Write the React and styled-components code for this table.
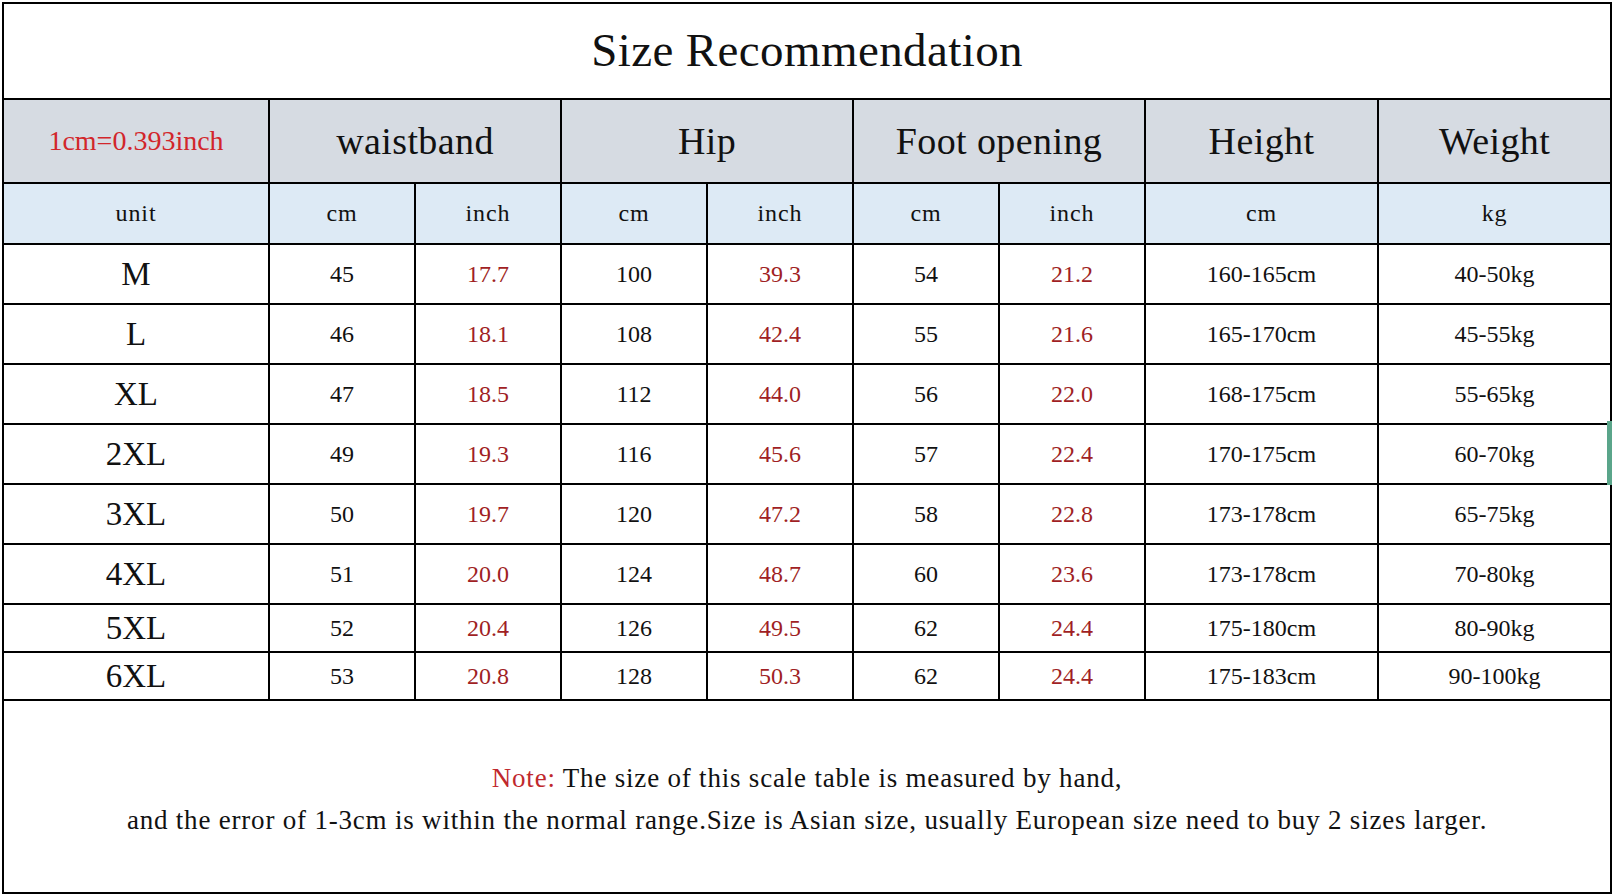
import React from 'react';
import styled, { createGlobalStyle } from 'styled-components';

const Global = createGlobalStyle`
    html, body {
        margin: 0;
        padding: 0;
        background: #fff;
    }
    body {
        font-family: "Liberation Serif", "Times New Roman", serif;
        color: #111;
    }
`;

const Page = styled.div`
    position: relative;
    width: 1612px;
    height: 894px;
    padding: 2px 0 0 2px;
    box-sizing: border-box;
    overflow: hidden;
`;

const Table = styled.table`
    width: 1608px;
    table-layout: fixed;
    border-collapse: collapse;
    border: 2px solid #000;

    td, th {
        border: 2px solid #000;
        padding: 0;
        text-align: center;
        vertical-align: middle;
        white-space: nowrap;
    }
`;

const TitleCell = styled.th`
    height: 92px;
    font-size: 47px;
    font-weight: normal;
    letter-spacing: 0.4px;
    padding-bottom: 2px !important;
`;

const HeadCell = styled.th`
    height: 82px;
    background: #d6dbe2;
    font-weight: normal;
    font-size: ${props => props.small ? '28px' : '38px'};
    color: ${props => props.small ? '#d2262b' : '#111'};
    letter-spacing: ${props => props.small ? '0' : '0.4px'};
`;

const UnitCell = styled.td`
    height: 59px;
    background: #ddeaf5;
    font-size: 24px;
    letter-spacing: 0.9px;
`;

const SizeCell = styled.td`
    height: ${props => props.short ? '46px' : '58px'};
    font-size: 33px;
`;

const ValueCell = styled.td`
    font-size: 24px;
    color: ${props => props.red ? '#a01f24' : '#111'};
`;

const NoteCell = styled.td`
    height: 187px;
    font-size: 27px;
    line-height: 42px;
    letter-spacing: 0.8px;
    padding-top: 4px !important;
`;

const NoteLabel = styled.span`
    color: #c0282d;
`;

const Handle = styled.div`
    position: absolute;
    left: 1607px;
    top: 421px;
    width: 5px;
    height: 64px;
    background: #5aa58a;
`;

const widths = [266, 146, 146, 146, 146, 146, 146, 233, 233];

const rows = [
    ['M', 45, '17.7', 100, '39.3', 54, '21.2', '160-165cm', '40-50kg'],
    ['L', 46, '18.1', 108, '42.4', 55, '21.6', '165-170cm', '45-55kg'],
    ['XL', 47, '18.5', 112, '44.0', 56, '22.0', '168-175cm', '55-65kg'],
    ['2XL', 49, '19.3', 116, '45.6', 57, '22.4', '170-175cm', '60-70kg'],
    ['3XL', 50, '19.7', 120, '47.2', 58, '22.8', '173-178cm', '65-75kg'],
    ['4XL', 51, '20.0', 124, '48.7', 60, '23.6', '173-178cm', '70-80kg'],
    ['5XL', 52, '20.4', 126, '49.5', 62, '24.4', '175-180cm', '80-90kg'],
    ['6XL', 53, '20.8', 128, '50.3', 62, '24.4', '175-183cm', '90-100kg'],
];

const redCols = [2, 4, 6];

export default function App() {
    return (
        <Page>
            <Global />
            <Table>
                <colgroup>
                    {widths.map((w, i) => <col key={i} style={{ width: w }} />)}
                </colgroup>
                <tbody>
                    <tr>
                        <TitleCell colSpan={9}>Size Recommendation</TitleCell>
                    </tr>
                    <tr>
                        <HeadCell small>1cm=0.393inch</HeadCell>
                        <HeadCell colSpan={2}>waistband</HeadCell>
                        <HeadCell colSpan={2}>Hip</HeadCell>
                        <HeadCell colSpan={2}>Foot opening</HeadCell>
                        <HeadCell>Height</HeadCell>
                        <HeadCell>Weight</HeadCell>
                    </tr>
                    <tr>
                        {['unit', 'cm', 'inch', 'cm', 'inch', 'cm', 'inch', 'cm', 'kg'].map((u, i) => (
                            <UnitCell key={i}>{u}</UnitCell>
                        ))}
                    </tr>
                    {rows.map((r, ri) => (
                        <tr key={r[0]}>
                            <SizeCell short={ri > 5}>{r[0]}</SizeCell>
                            {r.slice(1).map((v, i) => (
                                <ValueCell key={i} red={redCols.includes(i + 1)}>{v}</ValueCell>
                            ))}
                        </tr>
                    ))}
                    <tr>
                        <NoteCell colSpan={9}>
                            <NoteLabel>Note:</NoteLabel> The size of this scale table is measured by hand,<br />
                            and the error of 1-3cm is within the normal range.Size is Asian size, usually European size need to buy 2 sizes larger.
                        </NoteCell>
                    </tr>
                </tbody>
            </Table>
            <Handle />
        </Page>
    );
}
